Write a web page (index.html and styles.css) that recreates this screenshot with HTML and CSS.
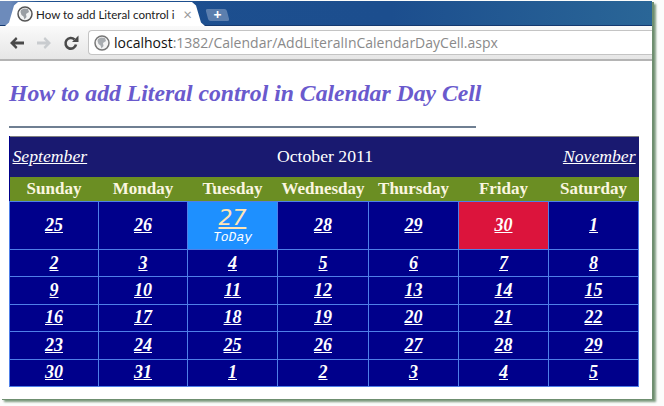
FILE: index.html
```html
<!DOCTYPE html>
<html lang="en">
<head>
    <meta charset="UTF-8">
    <title>How to add Literal control in Calendar Day Cell</title>
    <link rel="stylesheet" href="styles.css">
</head>
<body>
    <div class="window">
        <div class="tabstrip">
            <div class="tab">
                <svg class="globe" viewBox="0 0 16 16">
                    <circle cx="8" cy="8" r="7" fill="#f4f4f4" stroke="#555" stroke-width="1.5"/>
                    <path d="M4 4l3-1.5 4 .5 1 3-3 2 .5 3-2 2.5-1-3-2-1.5-1-3z" fill="#9a9ea3"/>
                </svg>
                <span class="tab-title">How to add Literal control i</span>
                <span class="tab-close">&times;</span>
            </div>
            <div class="new-tab">
                <span>+</span>
            </div>
        </div>
        <div class="toolbar">
            <svg class="nav-icon" viewBox="0 0 16 16">
                <path d="M1 8l6-6 1.5 2-2.5 2.500h9v3h-9l2.5 2.5-1.5 2z" fill="#4a4a4a"/>
            </svg>
            <svg class="nav-icon" viewBox="0 0 16 16">
                <path d="M15 8l-6-6-1.5 2 2.5 2.500h-9v3h9l-2.5 2.5 1.5 2z" fill="#c9cccf"/>
            </svg>
            <svg class="nav-icon reload" viewBox="0 0 16 16">
                <path d="M13 9.5a5.3 5.3 0 1 1-1.500-5" fill="none" stroke="#4a4a4a" stroke-width="2.6"/>
                <path d="M9 7h6.5V.5z" fill="#4a4a4a"/>
            </svg>
            <div class="omnibox">
                <svg class="globe" viewBox="0 0 16 16">
                    <circle cx="8" cy="8" r="7" fill="#f4f4f4" stroke="#777" stroke-width="1.5"/>
                    <path d="M4 4l3-1.5 4 .5 1 3-3 2 .5 3-2 2.5-1-3-2-1.5-1-3z" fill="#a8acb0"/>
                </svg>
                <span class="host">localhost</span><span class="path">:1382/Calendar/AddLiteralInCalendarDayCell.aspx</span>
            </div>
        </div>
        <div class="content">
            <h2 class="heading">How to add Literal control in Calendar Day Cell</h2>
            <hr class="rule">
            <table class="calendar">
                <colgroup>
                    <col class="col-narrow"><col class="col-narrow"><col class="col-mid"><col class="col-wide"><col class="col-mid"><col class="col-mid"><col class="col-mid">
                </colgroup>
                <tr class="title-row">
                    <td colspan="7">
                        <div class="title-bar">
                            <a href="#">September</a>
                            <span class="month">October 2011</span>
                            <a href="#">November</a>
                        </div>
                    </td>
                </tr>
                <tr class="head-row">
                    <th>Sunday</th><th>Monday</th><th>Tuesday</th><th>Wednesday</th><th>Thursday</th><th>Friday</th><th>Saturday</th>
                </tr>
                <tr class="first-row">
                    <td><a href="#">25</a></td>
                    <td><a href="#">26</a></td>
                    <td class="today"><a href="#">27</a><div class="today-label">ToDay</div></td>
                    <td><a href="#">28</a></td>
                    <td><a href="#">29</a></td>
                    <td class="selected"><a href="#">30</a></td>
                    <td><a href="#">1</a></td>
                </tr>
                <tr>
                    <td><a href="#">2</a></td><td><a href="#">3</a></td><td><a href="#">4</a></td><td><a href="#">5</a></td><td><a href="#">6</a></td><td><a href="#">7</a></td><td><a href="#">8</a></td>
                </tr>
                <tr>
                    <td><a href="#">9</a></td><td><a href="#">10</a></td><td><a href="#">11</a></td><td><a href="#">12</a></td><td><a href="#">13</a></td><td><a href="#">14</a></td><td><a href="#">15</a></td>
                </tr>
                <tr>
                    <td><a href="#">16</a></td><td><a href="#">17</a></td><td><a href="#">18</a></td><td><a href="#">19</a></td><td><a href="#">20</a></td><td><a href="#">21</a></td><td><a href="#">22</a></td>
                </tr>
                <tr>
                    <td><a href="#">23</a></td><td><a href="#">24</a></td><td><a href="#">25</a></td><td><a href="#">26</a></td><td><a href="#">27</a></td><td><a href="#">28</a></td><td><a href="#">29</a></td>
                </tr>
                <tr>
                    <td><a href="#">30</a></td><td><a href="#">31</a></td><td><a href="#">1</a></td><td><a href="#">2</a></td><td><a href="#">3</a></td><td><a href="#">4</a></td><td><a href="#">5</a></td>
                </tr>
            </table>
        </div>
    </div>
</body>
</html>
```
FILE: styles.css
```css
html, body {
    margin: 0;
    height: 100%;
    overflow: hidden;
    background-color: #fbfcfb;
}
.window {
    width: 652px;
    height: 398px;
    margin-top: 1px;
    background-color: #fff;
    box-shadow: 2px 1px 0 #6f8f70, 4px 3px 2px #7d9a7e;
    display: flex;
    flex-direction: column;
    font-family: "Open Sans", "Noto Sans", sans-serif;
}
.tabstrip {
    height: 24px;
    display: flex;
    background: linear-gradient(90deg, #6d8bbb 0, #6d8bbb 1.5%, #1d4f8f 6%, #1c4e8e 60%, #2a6697 100%);
    padding-left: 5px;
    border-bottom: 1px solid #15396f;
}
.tab {
    width: 200px;
    height: 24px;
    margin-top: 1px;
    padding: 0 13px 0 12px;
    box-sizing: border-box;
    display: flex;
    align-items: center;
    gap: 3px;
    background-color: #fff;
    clip-path: polygon(0 100%, 2% 85%, 4.5% 15%, 6.5% 0, 93.5% 0, 95.5% 15%, 98% 85%, 100% 100%);
    font-family: "Lato", sans-serif;
    font-size: 11.6px;
    color: #222;
}
.tab .globe {
    width: 16px;
    height: 16px;
    flex: none;
}
.tab-title {
    white-space: nowrap;
    flex: 1;
}
.tab-close {
    color: #999;
    font-size: 15px;
    line-height: 15px;
}
.new-tab {
    width: 21px;
    height: 12px;
    margin: 8px 0 0 2px;
    background-color: #5c7fae;
    border-radius: 2px;
    transform: skewX(15deg);
    color: #fff;
    font-size: 14px;
    font-weight: bold;
    line-height: 12px;
    text-align: center;
}
.new-tab span {
    display: block;
    transform: skewX(-15deg);
}
.toolbar {
    height: 35px;
    display: flex;
    align-items: center;
    padding-left: 9px;
    box-sizing: border-box;
    background: linear-gradient(#fafafa, #e6e6e6);
    border-bottom: 2px solid #b4b4b4;
}
.nav-icon {
    width: 16px;
    height: 16px;
    margin-right: 11px;
    flex: none;
}
.nav-icon.reload {
    margin-right: 9px;
}
.omnibox {
    flex: 1;
    height: 25px;
    display: flex;
    align-items: center;
    box-sizing: border-box;
    padding-left: 5px;
    background-color: #fff;
    border: 1px solid #c4c4c4;
    border-right: none;
    border-radius: 4px 0 0 4px;
    font-size: 14px;
}
.omnibox .globe {
    width: 16px;
    height: 16px;
    margin-right: 4px;
}
.host {
    color: #111;
}
.path {
    color: #8a8a8a;
}
.content {
    padding-left: 9px;
}
.heading {
    margin: 18px 0 0;
    font-family: "Liberation Serif", serif;
    font-size: 23.7px;
    font-weight: bold;
    font-style: italic;
    line-height: 28px;
    color: #6a5acd;
}
.rule {
    width: 467px;
    height: 2px;
    margin: 19px 0 8px;
    border: none;
    background-color: #6f7f92;
}
.calendar {
    width: 629px;
    height: 251px;
    table-layout: fixed;
    border-collapse: collapse;
    background-color: #00008b;
    font-family: "Liberation Serif", serif;
    color: #fff;
}
.col-narrow {
    width: 89px;
}
.col-mid {
    width: 90px;
}
.col-wide {
    width: 91px;
}
.calendar td {
    padding: 0;
    border: 1px solid #4f7fe8;
    text-align: center;
}
.calendar a {
    color: #fff;
    font-size: 18px;
    font-weight: bold;
    font-style: italic;
}
.title-row {
    height: 40px;
}
.title-row td {
    background-color: #191970;
    border: none;
    border-top: 1px solid #808080;
}
.title-bar {
    display: flex;
    justify-content: space-between;
    align-items: center;
    padding: 0 3px;
}
.calendar .title-bar a {
    font-size: 17.7px;
    font-weight: normal;
}
.month {
    font-size: 17.7px;
}
.head-row {
    height: 25px;
}
.calendar th {
    padding: 0;
    background-color: #6b8e23;
    border: none;
    color: #fbf6e0;
    font-size: 17px;
    font-weight: bold;
    white-space: nowrap;
}
.first-row {
    height: 48px;
}
.today {
    background-color: #1e90ff;
}
.calendar .today a {
    font-family: "DejaVu Sans", sans-serif;
    font-size: 22px;
    font-weight: normal;
    color: #ffe4b5;
    line-height: 24px;
}
.today-label {
    font-family: "Liberation Mono", monospace;
    font-size: 13px;
    font-style: italic;
    line-height: 16px;
}
.selected {
    background-color: #dc143c;
}
```
